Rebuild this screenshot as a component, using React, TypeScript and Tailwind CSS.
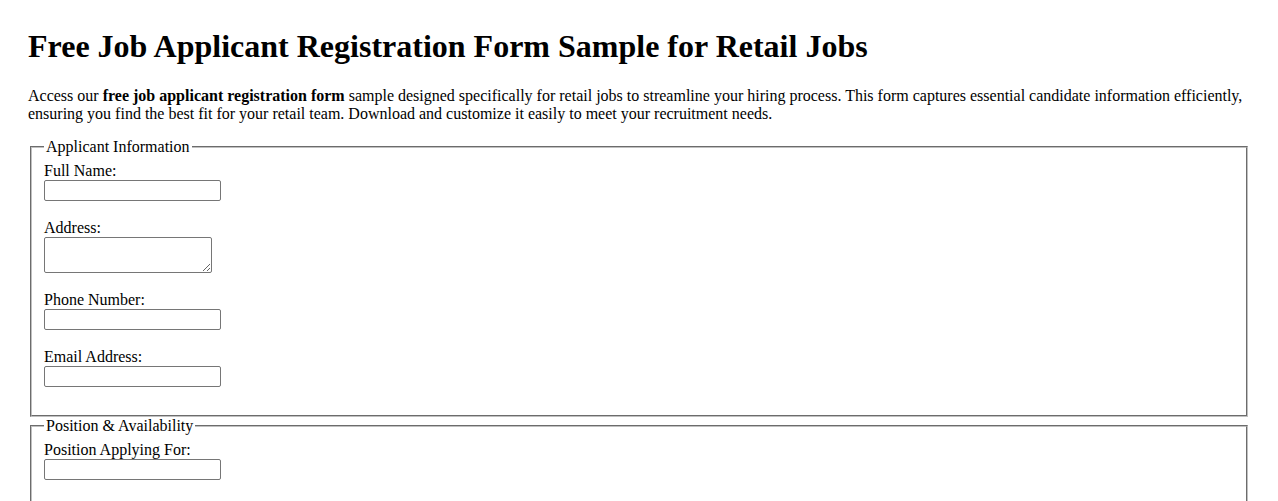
import React from 'react';

const Field: React.FC<{ label: string; multiline?: boolean }> = ({ label, multiline }) => (
  <div className="mb-[18px]">
    <label className="block leading-[18px]">{label}</label>
    {multiline ? (
      <textarea className="block w-[168px] h-[36px] border border-[#767676] rounded-[2px] bg-white" />
    ) : (
      <input type="text" className="block w-[177px] h-[21px] border border-[#767676] rounded-[2px] bg-white" />
    )}
  </div>
);

export default function App() {
  return (
    <div className="min-h-screen bg-white text-black font-['Liberation_Serif','Times_New_Roman',serif] text-[16px] px-[28px] pt-[28px] pb-[28px]">
      <h1 className="text-[32px] font-bold leading-[37px] mb-[22px]">
        Free Job Applicant Registration Form Sample for Retail Jobs
      </h1>
      <p className="leading-[18.4px] mb-[14px]">
        Access our <strong className="font-bold">free job applicant registration form</strong> sample designed
        specifically for retail jobs to streamline your hiring process. This form captures essential candidate
        information efficiently, ensuring you find the best fit for your retail team. Download and customize it
        easily to meet your recruitment needs.
      </p>

      <form>
        <fieldset className="mx-[2px] border-2 [border-style:groove] border-[#c0c0c0] px-[12px] pt-[6px] pb-[10px]">
          <legend className="px-[2px] leading-[18.4px]">Applicant Information</legend>
          <Field label="Full Name:" />
          <Field label="Address:" multiline />
          <Field label="Phone Number:" />
          <Field label="Email Address:" />
        </fieldset>

        <fieldset className="mx-[2px] border-2 [border-style:groove] border-[#c0c0c0] px-[12px] pt-[5px] pb-[10px]">
          <legend className="px-[2px] leading-[18.4px]">Position &amp; Availability</legend>
          <Field label="Position Applying For:" />
        </fieldset>
      </form>
    </div>
  );
}
